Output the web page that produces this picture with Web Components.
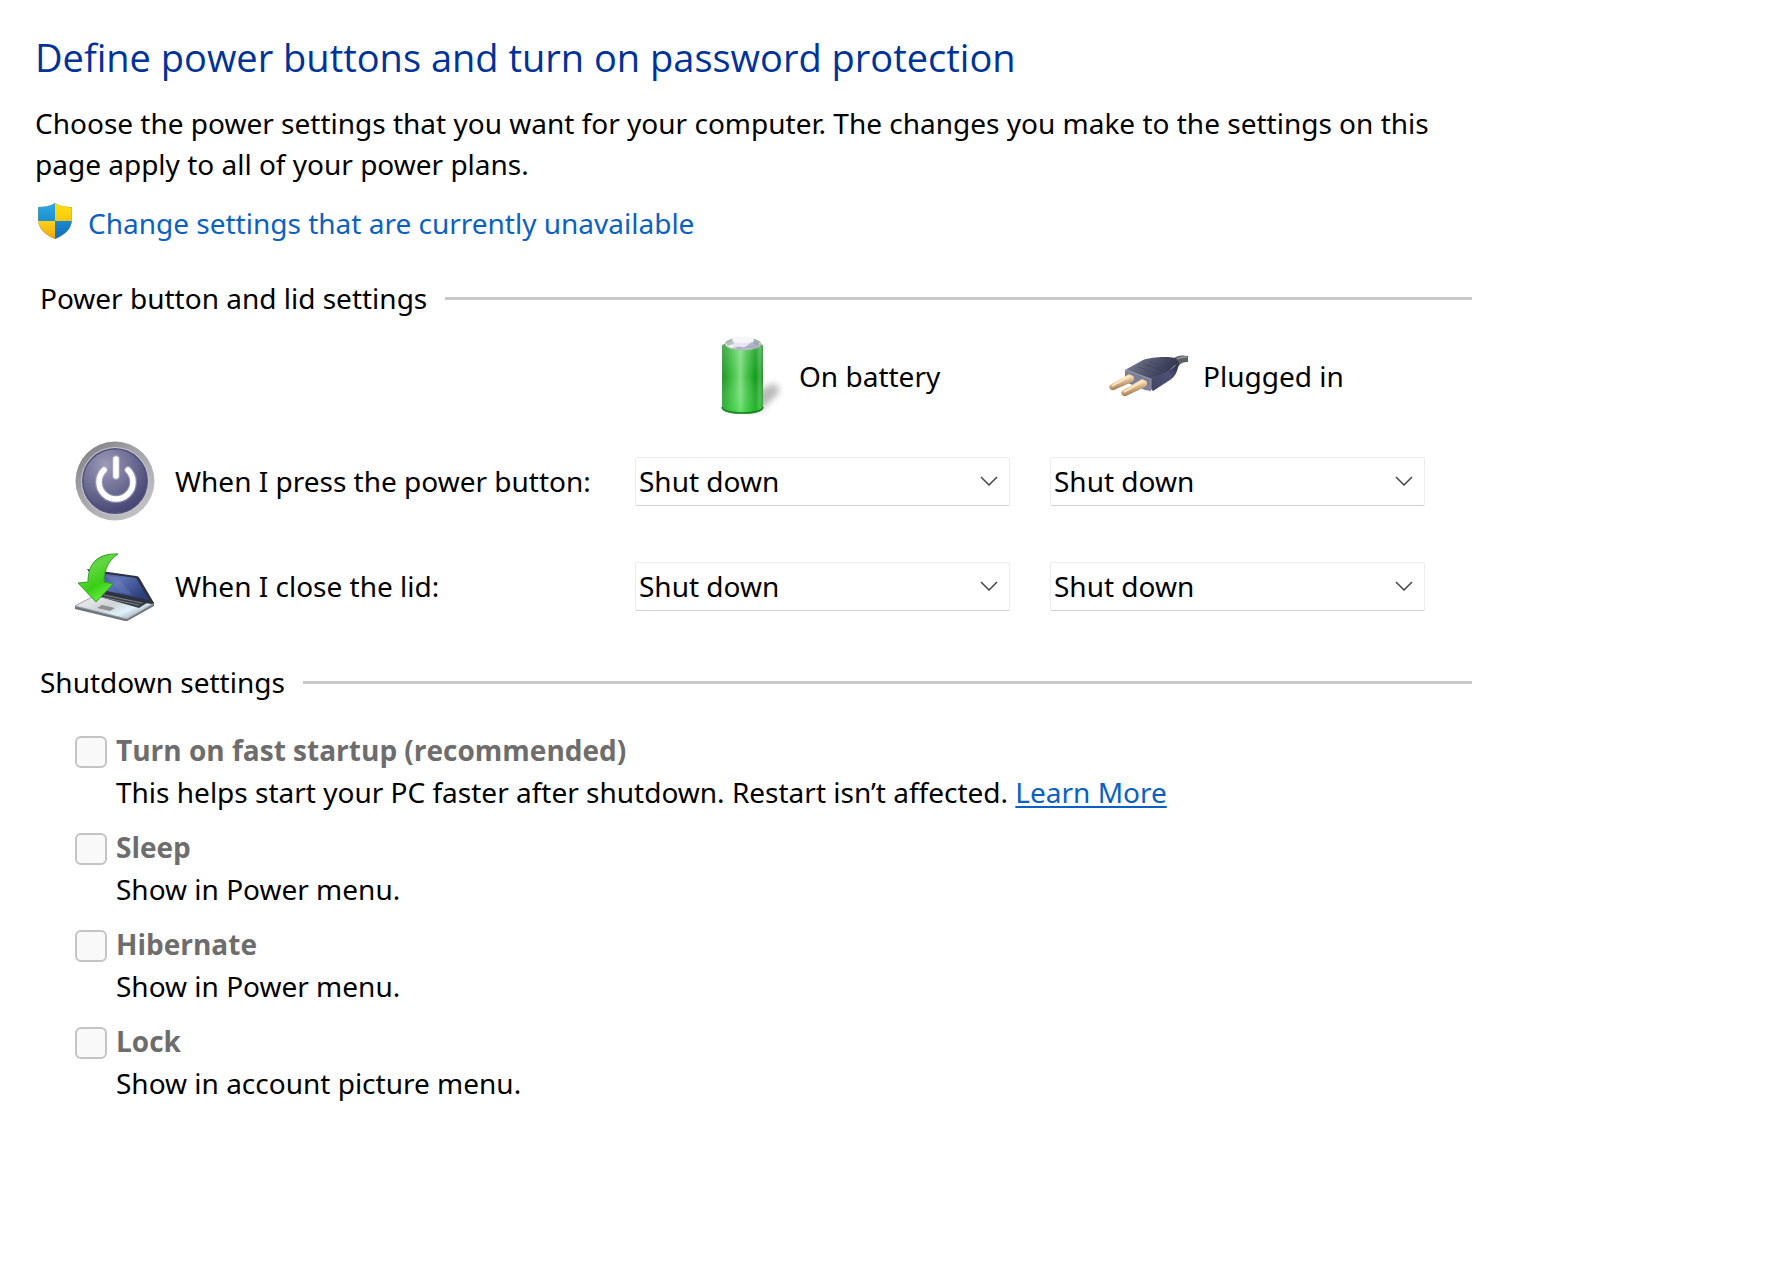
<!DOCTYPE html>
<html lang="en">
<head>
<meta charset="utf-8">
<title>System Settings</title>
<style>
  body {
    margin: 0;
    background: #fff;
    color: #000;
    font: 28px/41px "Noto Sans", "Open Sans", sans-serif;
    --link-color: #0a61c2;
  }
</style>
</head>
<body>
<power-page>
  <page-intro heading="Define power buttons and turn on password protection">
    Choose the power settings that you want for your computer. The changes you make to the settings on this page apply to all of your power plans.
  </page-intro>
  <admin-link href="#">Change settings that are currently unavailable</admin-link>

  <settings-group heading="Power button and lid settings">
    <source-header></source-header>
    <action-row icon="power" label="When I press the power button:"></action-row>
    <action-row icon="lid" label="When I close the lid:"></action-row>
  </settings-group>

  <settings-group heading="Shutdown settings" class="shutdown">
    <shutdown-option label="Turn on fast startup (recommended)">This helps start your PC faster after shutdown. Restart isn’t affected. <text-link href="#">Learn More</text-link></shutdown-option>
    <shutdown-option label="Sleep">Show in Power menu.</shutdown-option>
    <shutdown-option label="Hibernate">Show in Power menu.</shutdown-option>
    <shutdown-option label="Lock">Show in account picture menu.</shutdown-option>
  </settings-group>
</power-page>

<script>
const ICONS = {
  shield: `
    <svg viewBox="0 0 34 36" width="34" height="36" aria-hidden="true">
      <defs>
        <clipPath id="s"><path d="M17 0C12 3 6 4 0 4v12c0 10 7 16 17 20 10-4 17-10 17-20V4C28 4 22 3 17 0z"/></clipPath>
        <linearGradient id="b" x2="0" y2="1"><stop stop-color="#2fa9e4"/><stop offset="1" stop-color="#1b8fd2"/></linearGradient>
        <linearGradient id="y" x2="0" y2="1"><stop stop-color="#ffdf0c"/><stop offset="1" stop-color="#f9c80c"/></linearGradient>
        <linearGradient id="d" x2="0" y2="1"><stop stop-color="#1c88d0"/><stop offset="1" stop-color="#0f6cb8"/></linearGradient>
        <linearGradient id="o" x2="0" y2="1"><stop stop-color="#fdd21a"/><stop offset="1" stop-color="#eda50f"/></linearGradient>
      </defs>
      <g clip-path="url(#s)">
        <path fill="url(#b)" d="M0 0h17v18H0z"/>
        <path fill="url(#y)" d="M17 0h17v18H17z"/>
        <path fill="url(#o)" d="M0 18h17v18H0z"/>
        <path fill="url(#d)" d="M17 18h17v18H17z"/>
        <path fill="none" stroke="#8a9a48" stroke-opacity=".6" d="M17 0C12 3 6 4 0 4v12c0 10 7 16 17 20 10-4 17-10 17-20V4C28 4 22 3 17 0z"/>
      </g>
    </svg>`,
  battery: `
    <svg viewBox="0 0 80 80" width="80" height="80" aria-hidden="true">
      <defs>
        <linearGradient id="g">
          <stop stop-color="#36913a"/><stop offset=".1" stop-color="#29a72f"/><stop offset=".3" stop-color="#4fc952"/>
          <stop offset=".45" stop-color="#7fdc80"/><stop offset=".58" stop-color="#4cc650"/><stop offset=".82" stop-color="#129c1b"/>
          <stop offset=".93" stop-color="#45b54a"/><stop offset="1" stop-color="#2b8631"/>
        </linearGradient>
        <linearGradient id="v" x2="0" y2="1"><stop stop-color="#fff" stop-opacity=".18"/><stop offset=".5" stop-color="#fff" stop-opacity="0"/><stop offset="1" stop-color="#20e52c" stop-opacity=".35"/></linearGradient>
        <linearGradient id="c" x2="1" y2=".4"><stop stop-color="#b4b7c4"/><stop offset=".4" stop-color="#fafaff"/><stop offset=".6" stop-color="#a9abc2"/><stop offset="1" stop-color="#dcdee8"/></linearGradient>
        <filter id="f" x="-50%" y="-50%" width="200%" height="200%"><feGaussianBlur stdDeviation="3"/></filter>
      </defs>
      <path d="M50 56l18-8c7 0 9 6 5 11L56 75H40z" fill="#777" opacity=".5" filter="url(#f)"/>
      <path d="M18 10c0-5 41-5 41 0v62c0 8-41 8-41 0z" fill="url(#g)"/>
      <path d="M18 10c0-5 41-5 41 0v62c0 8-41 8-41 0z" fill="url(#v)"/>
      <path d="M18 71c0 8 41 8 41 0" fill="none" stroke="#267c2b" stroke-width="1.5"/>
      <ellipse cx="39" cy="8" rx="18" ry="6" fill="url(#c)" stroke="#a9bdb0"/>
      <path d="M28 4c0-4 22-4 22 0v4c0 4-22 4-22 0z" fill="#e6e7f2"/>
      <ellipse cx="39" cy="4" rx="11" ry="3" fill="#f6f6fb"/>
      <path d="M40 12l8-6 8 2-3 5z" fill="#9799b3" opacity=".65"/>
      <path d="M22 6l6-3 2 5-6 2z" fill="#8ba095" opacity=".5"/>
      <path d="M50 3l6 3-2 3-5-2z" fill="#7f9288" opacity=".5"/>
    </svg>`,
  plug: `
    <svg viewBox="0 0 80 80" width="80" height="80" aria-hidden="true">
      <defs>
        <linearGradient id="t" x2="1" y2=".3"><stop stop-color="#83879c"/><stop offset=".5" stop-color="#545971"/><stop offset="1" stop-color="#30354d"/></linearGradient>
        <linearGradient id="r" x1="0" y1="1" x2="1" y2="0"><stop stop-color="#42455f"/><stop offset=".6" stop-color="#4d5076"/><stop offset="1" stop-color="#262a40"/></linearGradient>
        <linearGradient id="p" x2=".4" y2="1"><stop stop-color="#b58d5d"/><stop offset=".4" stop-color="#ffe3b8"/><stop offset="1" stop-color="#94683f"/></linearGradient>
      </defs>
      <path d="M64 24c5-5 9-5 16-4v6c-6 0-8 2-11 6z" fill="#5c5f63"/>
      <path d="M69 23c3-2 6-2 10-2" stroke="#94969a" stroke-width="1.500" fill="none"/>
      <path d="M17 34l18-10c8-3 24-4 32-2l4 4-13 11-15 6z" fill="url(#t)"/>
      <path d="M43 43c9-5 19-7 28-17-1 8-3 14-9 18l-17 11-2-2z" fill="url(#r)"/>
      <path d="M17 34l26 9v12l-6-1-20-8z" fill="#7b7e95"/>
      <path d="M18 34l25 9v10" stroke="#9698aa" fill="none"/>
      <path d="M35 28l16 5m-21-2l18 6m-13-9l18 6m-12-8l16 5" stroke="#363c54" opacity=".4"/>
      <path d="M21 38l4 2c2 2 1 5-1 6L6 54c-4 1-6-3-4-5z" fill="url(#p)"/>
      <path d="M34 43l4 2c2 2 1 5-1 6L18 60c-4 1-6-3-4-5z" fill="url(#p)"/>
      <path d="M4 50l18-10M16 56l19-11" stroke="#ffe9c6" stroke-width="1.500"/>
    </svg>`,
  power: `
    <svg viewBox="0 0 80 80" width="80" height="80" aria-hidden="true">
      <defs>
        <linearGradient id="k" x1="0" y1="0" x2=".8" y2="1"><stop stop-color="#77777c"/><stop offset=".4" stop-color="#a0a0a5"/><stop offset="1" stop-color="#c5c5c8"/></linearGradient>
        <radialGradient id="m" cx=".35" cy=".25" r=".8"><stop stop-color="#9c9bb8"/><stop offset=".5" stop-color="#706f95"/><stop offset="1" stop-color="#444372"/></radialGradient>
      </defs>
      <circle cx="40" cy="40" r="39.500" fill="url(#k)"/>
      <circle cx="40" cy="40" r="34" fill="#c6c6d0"/>
      <circle cx="40" cy="40" r="33" fill="#50507a"/>
      <circle cx="40" cy="40" r="31.500" fill="url(#m)"/>
      <g fill="none" stroke-linecap="round">
        <path d="M29 29a17 17 0 1 0 24 0M41 18v17" stroke="#bdbcdc" stroke-width="8" opacity=".45"/>
        <path d="M29 29a17 17 0 1 0 24 0M41 18v17" stroke="#fff" stroke-width="5.500"/>
      </g>
    </svg>`,
  lid: `
    <svg viewBox="0 0 80 80" width="80" height="80" aria-hidden="true">
      <defs>
        <linearGradient id="n" x2="1" y2=".6"><stop stop-color="#3f5293"/><stop offset=".5" stop-color="#5b70b3"/><stop offset="1" stop-color="#2c3f7c"/></linearGradient>
        <linearGradient id="a" x2="1" y2=".7"><stop stop-color="#f4f6f8"/><stop offset=".5" stop-color="#cfd3d8"/><stop offset=".75" stop-color="#dff2fb"/><stop offset="1" stop-color="#9ba5b0"/></linearGradient>
        <linearGradient id="w" x2=".5" y2="1"><stop stop-color="#2f9625"/><stop offset=".35" stop-color="#63d743"/><stop offset=".7" stop-color="#39cf16"/><stop offset="1" stop-color="#67ed3d"/></linearGradient>
      </defs>
      <path d="M0 60v3l50 12c2 0 3 0 4-1l25-14v-4z" fill="#6f747b"/>
      <path d="M0 60l21-11 57 9-26 15z" fill="url(#a)" stroke="#9a9fa5"/>
      <path d="M22 50l10-4 43 9-11 7z" fill="#3a3d46"/>
      <path d="M26 51l38 8M29 49l38 8M33 48l38 7" stroke="#7a7f89"/>
      <path d="M27 59l13 3-5 3-13-3z" fill="#8d8f91"/>
      <path d="M12 23l49 7c2 0 3 1 4 3l14 24-2 1-48-10z" fill="#2d3240"/>
      <path d="M17 26l44 6 13 22-42-9z" fill="url(#n)"/>
      <path d="M30 29l13 2 14 18-12-3z" fill="#8397ce" opacity=".25"/>
      <path d="M43 8C34 14 29 23 29 36l9 2-17 18L3 37l10-1C13 20 20 7 43 8z" fill="url(#w)" stroke="#379f28" stroke-linejoin="round"/>
    </svg>`,
};

class PowerPage extends HTMLElement {
  constructor() {
    super();
    this.attachShadow({ mode: 'open' });
    this.shadowRoot.innerHTML = `
      <style>
        :host { display: block; }
        main {
          box-sizing: border-box;
          max-width: 1472px;
          padding: 31px 0 40px 35px;
        }
        ::slotted(admin-link) { margin-top: 18px; }
        ::slotted(settings-group) { margin-top: 34px; }
        ::slotted(settings-group.shutdown) { margin-top: 36px; }
      </style>
      <main><slot></slot></main>`;
  }
}
window.customElements.define('power-page', PowerPage);

class PageIntro extends HTMLElement {
  constructor() {
    super();
    this.attachShadow({ mode: 'open' });
    this.shadowRoot.innerHTML = `
      <style>
        :host { display: block; }
        h1 {
          margin: 0 0 20px;
          color: #003399;
          font-family: "Open Sans", "Noto Sans", sans-serif;
          font-size: 38px;
          font-weight: 400;
          line-height: 52px;
        }
        p { margin: 0; }
      </style>
      <h1>${this.getAttribute('heading')}</h1>
      <p><slot></slot></p>`;
  }
}
window.customElements.define('page-intro', PageIntro);

class AdminLink extends HTMLElement {
  constructor() {
    super();
    this.attachShadow({ mode: 'open' });
    this.shadowRoot.innerHTML = `
      <style>
        :host { display: block; padding-left: 3px; }
        a {
          display: flex;
          gap: 16px;
          width: fit-content;
          color: var(--link-color);
          text-decoration: none;
        }
        a:hover { text-decoration: underline; }
        svg { flex: none; }
      </style>
      <a href="${this.getAttribute('href')}">${ICONS.shield}<slot></slot></a>`;
  }
}
window.customElements.define('admin-link', AdminLink);

class TextLink extends HTMLElement {
  constructor() {
    super();
    this.attachShadow({ mode: 'open' });
    this.shadowRoot.innerHTML = `
      <style>
        :host { display: inline; }
        a { color: var(--link-color); text-decoration-thickness: 2px; text-underline-offset: 3px; }
      </style>
      <a href="${this.getAttribute('href')}"><slot></slot></a>`;
  }
}
window.customElements.define('text-link', TextLink);

class SettingsGroup extends HTMLElement {
  constructor() {
    super();
    this.attachShadow({ mode: 'open' });
    this.shadowRoot.innerHTML = `
      <style>
        :host { display: block; }
        header {
          display: flex;
          align-items: center;
          gap: 18px;
          padding-left: 5px;
        }
        h2 { margin: 0; font-size: inherit; font-weight: 400; }
        .rule { flex: 1; height: 3px; background: #c8c8c8; }
        .rows {
          display: flex;
          flex-direction: column;
          gap: 25px;
          padding: 17px 47px 0 40px;
        }
        :host(.shutdown) .rows { gap: 13px; padding-top: 26px; }
      </style>
      <section>
        <header>
          <h2>${this.getAttribute('heading')}</h2>
          <div class="rule"></div>
        </header>
        <div class="rows"><slot></slot></div>
      </section>`;
  }
}
window.customElements.define('settings-group', SettingsGroup);

class SourceHeader extends HTMLElement {
  constructor() {
    super();
    this.attachShadow({ mode: 'open' });
    this.shadowRoot.innerHTML = `
      <style>
        :host {
          display: grid;
          grid-template-columns: 404px 317px;
          justify-content: end;
        }
        div {
          display: flex;
          align-items: center;
          gap: 15px;
        }
      </style>
      <div>${ICONS.battery}<span>On battery</span></div>
      <div>${ICONS.plug}<span>Plugged in</span></div>`;
  }
}
window.customElements.define('source-header', SourceHeader);

class ActionRow extends HTMLElement {
  constructor() {
    super();
    const label = this.getAttribute('label');
    this.attachShadow({ mode: 'open' });
    this.shadowRoot.innerHTML = `
      <style>
        :host {
          display: grid;
          grid-template-columns: 1fr 375px 375px;
          align-items: center;
          gap: 40px;
        }
        .name {
          display: flex;
          align-items: center;
          gap: 20px;
          white-space: nowrap;
        }
        .name svg { flex: none; }
        .drop { display: grid; align-items: center; }
        .drop > * { grid-area: 1 / 1; }
        .drop svg { justify-self: end; margin-right: 12px; pointer-events: none; }
        select {
          appearance: none;
          box-sizing: border-box;
          width: 100%;
          height: 49px;
          margin: 0;
          padding: 0 40px 0 3px;
          border: 1px solid #ececec;
          border-bottom-color: #cfcfcf;
          border-radius: 2px;
          background: #fff;
          color: inherit;
          font: inherit;
        }
      </style>
      <label class="name" for="battery">${ICONS[this.getAttribute('icon')]}<span>${label}</span></label>
      ${this._dropTemplate('battery', `${label} On battery`)}
      ${this._dropTemplate('plugged', `${label} Plugged in`)}`;
  }

  _dropTemplate(id, name) {
    return `<div class="drop">
      <select id="${id}" aria-label="${name}">
        <option>Do nothing</option>
        <option>Sleep</option>
        <option>Hibernate</option>
        <option selected>Shut down</option>
      </select>
      <svg viewBox="0 0 18 10" width="18" height="10" aria-hidden="true">
        <path d="M1 1l8 8 8-8" fill="none" stroke="#444" stroke-width="1.500"/>
      </svg>
    </div>`;
  }
}
window.customElements.define('action-row', ActionRow);

class ShutdownOption extends HTMLElement {
  constructor() {
    super();
    this.attachShadow({ mode: 'open' });
    this.shadowRoot.innerHTML = `
      <style>
        :host { display: block; line-height: 42px; }
        .title {
          display: flex;
          align-items: flex-start;
          gap: 9px;
        }
        input {
          appearance: none;
          flex: none;
          box-sizing: border-box;
          width: 32px;
          height: 32px;
          margin: 7px 0 0;
          border: 2px solid #c4c4c4;
          border-radius: 6px;
          background: #f9f9f9;
        }
        label {
          color: #6d6d6d;
          font-family: "Open Sans", "Noto Sans", sans-serif;
          font-weight: 700;
        }
        p { margin: 0 0 0 41px; }
      </style>
      <div class="title">
        <input type="checkbox" id="check" aria-describedby="hint" disabled>
        <label for="check">${this.getAttribute('label')}</label>
      </div>
      <p id="hint"><slot></slot></p>`;
  }
}
window.customElements.define('shutdown-option', ShutdownOption);
</script>
</body>
</html>
